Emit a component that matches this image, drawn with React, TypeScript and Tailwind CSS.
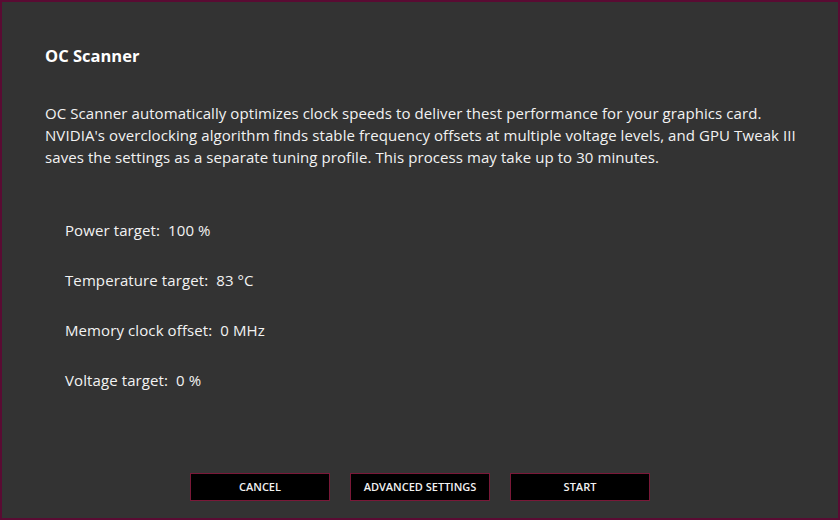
export default function App() {
  const settings = [
    { label: 'Power target:', value: '100 %' },
    { label: 'Temperature target:', value: '83 °C' },
    { label: 'Memory clock offset:', value: '0 MHz' },
    { label: 'Voltage target:', value: '0 %' }
  ];

  const buttons = ['CANCEL', 'ADVANCED SETTINGS', 'START'];

  return (
    <div
      className="flex h-[520px] w-[840px] flex-col border-2 border-[#5a0b33] bg-[#333333] text-[#f2f2f2]"
      style={{ fontFamily: '"Open Sans", "Noto Sans", sans-serif' }}
    >
      <div className="px-[43px] pt-[43px]">
        <h1 className="text-[16.5px] font-bold leading-[22px] text-white">OC Scanner</h1>
        <p className="mt-[35px] text-[15px] leading-[22px] tracking-[0.08px] whitespace-nowrap">
          OC Scanner automatically optimizes clock speeds to deliver thest performance for your graphics card.
          <br />
          NVIDIA's overclocking algorithm finds stable frequency offsets at multiple voltage levels, and GPU Tweak III
          <br />
          saves the settings as a separate tuning profile. This process may take up to 30 minutes.
        </p>
      </div>
      <div className="mt-[51px] flex flex-col gap-[28px] px-[63px]">
        {settings.map((item) => (
          <div key={item.label} className="text-[15px] leading-[22px] tracking-[0.1px]">
            {item.label}&nbsp; {item.value}
          </div>
        ))}
      </div>
      <div className="mt-auto mb-[17px] flex justify-center gap-[20px]">
        {buttons.map((label) => (
          <button
            key={label}
            type="button"
            className="flex h-[28px] w-[140px] items-center justify-center border border-[#7a1838] bg-black text-[11px] font-semibold text-[#f2f2f2]"
          >
            {label}
          </button>
        ))}
      </div>
    </div>
  );
}
